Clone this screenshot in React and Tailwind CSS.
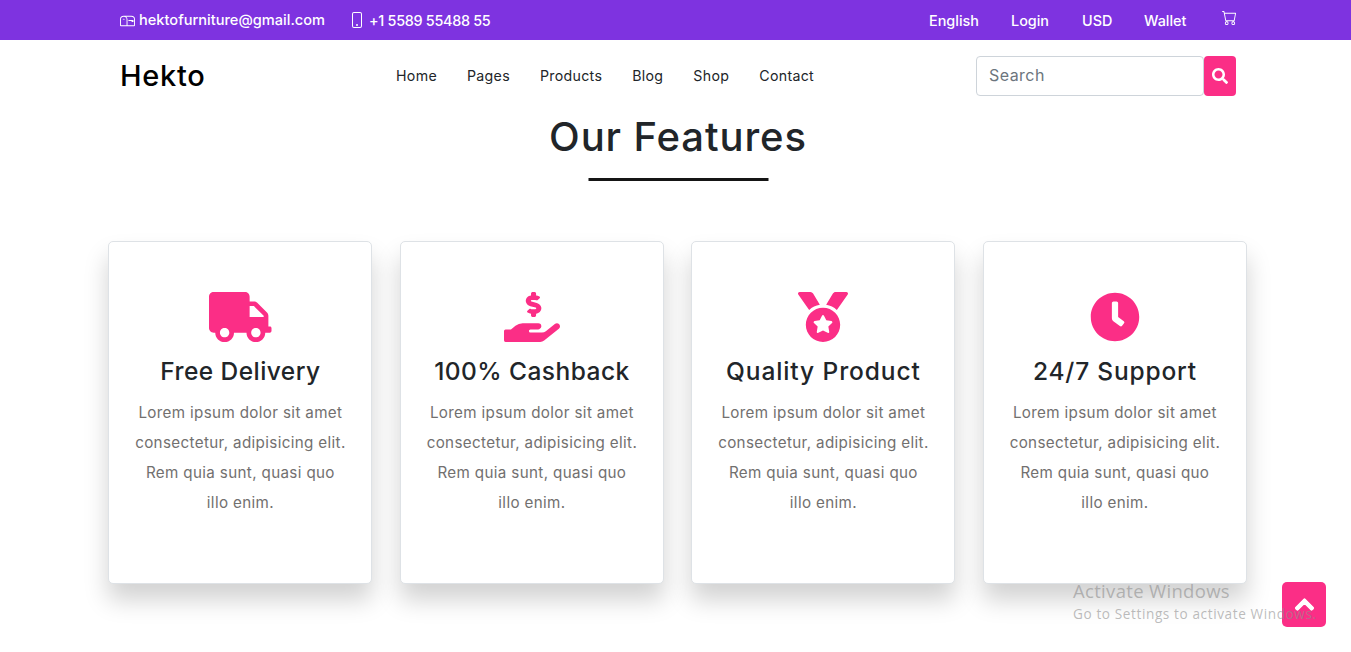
import React from "react";
import { FaTruck, FaHandHoldingUsd, FaMedal, FaClock, FaSearch, FaChevronUp } from "react-icons/fa";
import { BsMailbox, BsPhone, BsCart } from "react-icons/bs";

const font = { fontFamily: "Inter, 'Liberation Sans', sans-serif" };

const cards = [
  { icon: FaTruck, title: "Free Delivery", size: "w-[62.5px]", track: "tracking-[0.45px]" },
  { icon: FaHandHoldingUsd, title: "100% Cashback", size: "w-[56px]", track: "tracking-[0.45px]" },
  { icon: FaMedal, title: "Quality Product", size: "w-[50px]", track: "tracking-[0.9px]" },
  { icon: FaClock, title: "24/7 Support", size: "w-[50px]", track: "tracking-[0.8px]" },
];

function Card({ icon: Icon, title, size, track }) {
  return (
    <div className="h-[343px] rounded-[5px] border border-[#dee2e6] bg-white pt-[50px] px-6 text-center shadow-[0_16px_24px_rgba(0,0,0,0.18)]">
      <div className="flex h-[50px] justify-center">
        <Icon className={`h-[50px] ${size} text-[#fb2e86]`} />
      </div>
      <h3 className={`mt-[8px] h-[42px] text-[24.5px] leading-[42px] font-medium ${track} text-[#212529] whitespace-nowrap`}>{title}</h3>
      <p className="mt-[6px] text-[15.2px] leading-[30px] tracking-[0.35px] text-[#72706f] whitespace-nowrap">
        Lorem ipsum dolor sit amet<br />consectetur, adipisicing elit.<br />Rem quia sunt, quasi quo<br />illo enim.
      </p>
    </div>
  );
}

export default function App() {
  return (
    <div className="relative h-[652px] overflow-hidden bg-white" style={font}>
      <div className="flex h-10 items-center justify-between bg-[#7e33e0] pl-[120px] pr-[114px] pt-[1px] text-[14.4px] font-medium text-white">
        <div className="flex items-center">
          <BsMailbox className="mr-[4px] text-[15px]" />
          <span className="text-[14.6px]">hektofurniture@gmail.com</span>
          <BsPhone className="ml-[24px] mr-[4px] text-[16px]" />
          <span className="tracking-[-0.3px]">+1 5589 55488 55</span>
        </div>
        <div className="flex items-center">
          <span className="w-[82px]">English</span>
          <span className="w-[71px]">Login</span>
          <span className="w-[62px]">USD</span>
          <span className="w-[78px]">Wallet</span>
          <BsCart className="mb-[7px] text-[15px]" />
        </div>
      </div>

      <div className="flex h-[72px] items-center pl-[120px] pr-[115px]">
        <div className="-mt-[1px] w-[276px] text-[29px] font-medium tracking-[0.7px] text-black">Hekto</div>
        <nav className="-mt-[1px] flex gap-[30px] text-[14.2px] tracking-[0.3px] text-[#212529]">
          <span>Home</span>
          <span>Pages</span>
          <span>Products</span>
          <span>Blog</span>
          <span>Shop</span>
          <span>Contact</span>
        </nav>
        <div className="ml-auto flex">
          <div className="flex h-10 w-[228px] items-center rounded-[4px] border border-[#ced4da] px-3 pb-[2px] text-[16px] tracking-[0.45px] text-[#6c757d]">Search</div>
          <div className="flex h-10 w-8 items-center justify-center rounded-[4px] bg-[#fb2e86]">
            <FaSearch className="text-[16px] text-white" />
          </div>
        </div>
      </div>

      <h2 className="-mt-[3px] pl-[5px] text-center text-[40px] leading-[56px] font-medium tracking-[0.9px] text-[#212529]">Our Features</h2>
      <div className="mx-auto mt-[13px] h-[3px] w-[180px] translate-x-[2.5px] bg-[#151515]" />

      <div className="mt-[60px] ml-[108.4px] grid w-[1138.5px] grid-cols-4 gap-[27.5px]">
        {cards.map((c) => (
          <Card key={c.title} {...c} />
        ))}
      </div>

      <div className="absolute left-[1282px] top-[582px] flex h-[45px] w-[44px] items-center justify-center rounded-[5px] bg-[#fb2e86]">
        <FaChevronUp className="text-[21px] text-white" stroke="currentColor" strokeWidth="30" />
      </div>
      <div className="absolute left-[1073px] top-[579px] whitespace-nowrap text-[#8f8f8f]/60" style={{ fontFamily: "'Open Sans', sans-serif" }}>
        <div className="text-[18.5px] leading-[24px] tracking-[0.32px]">Activate Windows</div>
        <div className="mt-[1px] text-[13.6px] leading-[20px] tracking-[0.6px]">Go to Settings to activate Windows.</div>
      </div>
    </div>
  );
}
